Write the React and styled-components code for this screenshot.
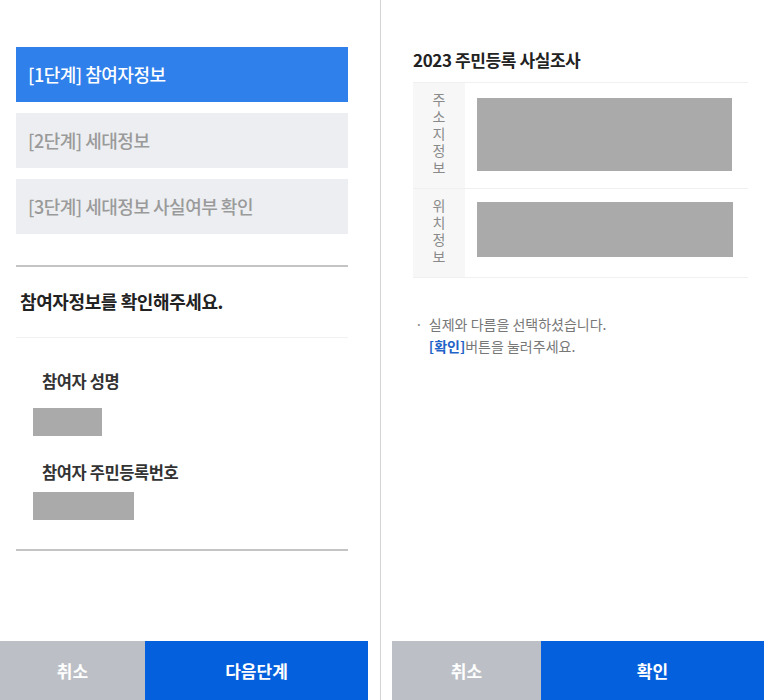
import styled, { createGlobalStyle } from "styled-components";

const GlobalStyle = createGlobalStyle`
  html, body {
    margin: 0;
    padding: 0;
    background: #fff;
  }
  body {
    font-family: "Noto Sans CJK KR", "Noto Sans", sans-serif;
    color: #222;
  }
`;

export default function App() {
  return (
    <>
      <GlobalStyle />
      <Screen>
        <Panel>
          <LeftContent>
            <Steps>
              <Step active>[1단계] 참여자정보</Step>
              <Step>[2단계] 세대정보</Step>
              <Step>[3단계] 세대정보 사실여부 확인</Step>
            </Steps>
            <Rule />
            <Heading>참여자정보를 확인해주세요.</Heading>
            <Rule light />
            <Fields>
              <FieldLabel>참여자 성명</FieldLabel>
              <Masked w="69px" h="28px" />
              <FieldLabel>참여자 주민등록번호</FieldLabel>
              <Masked w="101px" h="28px" />
            </Fields>
            <Rule />
          </LeftContent>
          <BottomBar right="12px">
            <BarButton cancel w="145px">취소</BarButton>
            <BarButton>다음단계</BarButton>
          </BottomBar>
        </Panel>
        <Divider />
        <Panel>
          <RightContent>
            <Title>2023 주민등록 사실조사</Title>
            <InfoTable>
              <InfoRow>
                <RowHead>
                  <VerticalLabel>주소지정보</VerticalLabel>
                </RowHead>
                <RowBody top="15px">
                  <Masked w="255px" h="73px" />
                </RowBody>
              </InfoRow>
              <InfoRow>
                <RowHead>
                  <VerticalLabel>위치정보</VerticalLabel>
                </RowHead>
                <RowBody top="13px">
                  <Masked w="256px" h="55px" />
                </RowBody>
              </InfoRow>
            </InfoTable>
            <Notice>
              <Bullet>·</Bullet>
              <div>
                실제와 다름을 선택하셨습니다.
                <br />
                <Accent>[확인]</Accent>버튼을 눌러주세요.
              </div>
            </Notice>
          </RightContent>
          <BottomBar left="11px">
            <BarButton cancel w="149px">취소</BarButton>
            <BarButton>확인</BarButton>
          </BottomBar>
        </Panel>
      </Screen>
    </>
  );
}

const Screen = styled.div`
  display: flex;
  width: 764px;
  height: 700px;
  overflow: hidden;
`;

const Panel = styled.div`
  flex: 1;
  display: flex;
  flex-direction: column;
  height: 100%;
`;

const Divider = styled.div`
  width: 1px;
  background: #d4d4d4;
`;

const LeftContent = styled.div`
  padding: 47px 32px 0 16px;
  display: flex;
  flex-direction: column;
`;

const Steps = styled.div`
  display: flex;
  flex-direction: column;
  gap: 11px;
  margin-bottom: 31px;
`;

const Step = styled.div`
  height: 55px;
  display: flex;
  align-items: center;
  padding: 0 0 2px 12px;
  box-sizing: border-box;
  font-size: 18px;
  font-weight: 500;
  letter-spacing: -0.5px;
  background: ${(p) => (p.active ? "#2f80ea" : "#eceef1")};
  color: ${(p) => (p.active ? "#fff" : "#9a9a9a")};
`;

const Rule = styled.div`
  height: ${(p) => (p.light ? "1px" : "2px")};
  background: ${(p) => (p.light ? "#f1f1f1" : "#c4c4c4")};
`;

const Heading = styled.div`
  padding: 22px 0 0 4px;
  height: 47px;
  box-sizing: border-box;
  font-size: 18px;
  font-weight: 700;
  letter-spacing: -0.4px;
  color: #222;
  line-height: 24px;
  margin-bottom: 23px;
`;

const Fields = styled.div`
  display: flex;
  flex-direction: column;
  align-items: flex-start;
  padding: 31px 0 29px 17px;
`;

const FieldLabel = styled.div`
  font-size: 16.5px;
  font-weight: 700;
  color: #333;
  letter-spacing: -0.4px;
  line-height: 24px;
  padding-left: 9px;
  margin-bottom: 15px;
  & + div + & {
    margin-top: 24px;
    margin-bottom: 8px;
  }
`;

const Masked = styled.div`
  width: ${(p) => p.w};
  height: ${(p) => p.h};
  background: #aaaaaa;
`;

const RightContent = styled.div`
  padding: 48px 16px 0 32px;
  display: flex;
  flex-direction: column;
`;

const Title = styled.div`
  font-size: 17px;
  font-weight: 700;
  color: #222;
  letter-spacing: -0.4px;
  line-height: 24px;
  margin-bottom: 10px;
`;

const InfoTable = styled.div`
  border-top: 1px solid #f0f0f0;
  border-bottom: 1px solid #f0f0f0;
`;

const InfoRow = styled.div`
  display: flex;
  & + & {
    border-top: 1px solid #f0f0f0;
  }
`;

const RowHead = styled.div`
  width: 52px;
  flex-shrink: 0;
  background: #f7f7f7;
  display: flex;
  justify-content: center;
  align-items: flex-start;
  padding: 10px 0;
`;

const VerticalLabel = styled.span`
  writing-mode: vertical-lr;
  text-orientation: upright;
  font-size: 14px;
  letter-spacing: 3px;
  line-height: 20px;
  color: #8a8a8a;
`;

const RowBody = styled.div`
  flex: 1;
  display: flex;
  align-items: flex-start;
  padding: ${(p) => p.top} 15px 0 12px;
`;

const Notice = styled.div`
  display: flex;
  gap: 6px;
  margin-top: 35px;
  padding-left: 2px;
  font-size: 14px;
  line-height: 22px;
  color: #777;
`;

const Bullet = styled.span`
  color: #888;
`;

const Accent = styled.span`
  color: #1f63c8;
  font-weight: 700;
`;

const BottomBar = styled.div`
  margin-top: auto;
  display: flex;
  height: 59px;
  margin-left: ${(p) => p.left || "0"};
  margin-right: ${(p) => p.right || "0"};
`;

const BarButton = styled.button`
  border: none;
  font-family: inherit;
  font-size: 17px;
  font-weight: 700;
  color: #fff;
  background: ${(p) => (p.cancel ? "#bcc0c6" : "#0560dd")};
  ${(p) => (p.w ? `width: ${p.w}; flex-shrink: 0;` : "flex: 1;")}
  padding: 0;
  cursor: pointer;
`;
